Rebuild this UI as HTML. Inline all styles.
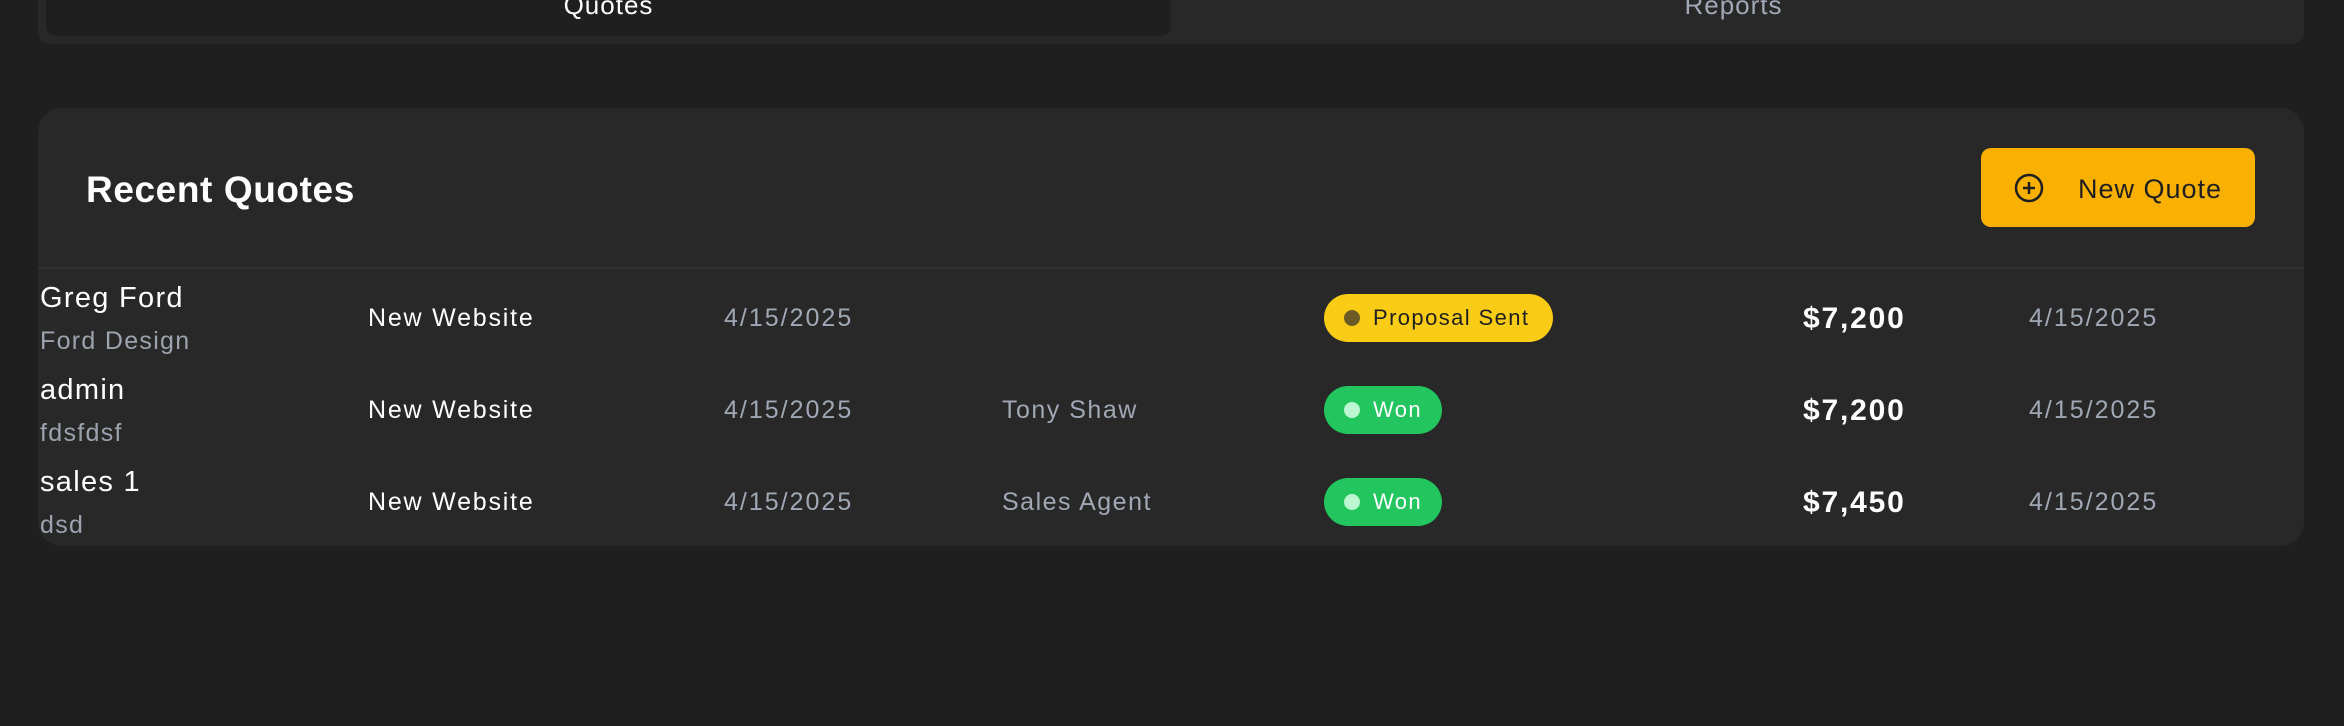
<!DOCTYPE html>
<html><head><meta charset="utf-8"><style>
*{margin:0;padding:0;box-sizing:border-box}
body{width:2344px;height:726px;background:#1f1f1f;font-family:"Liberation Sans",sans-serif;position:relative;overflow:hidden}
.abs{position:absolute;white-space:nowrap}
.tabs{left:38px;top:-20px;width:2266px;height:64px;background:#282828;border-radius:0 0 12px 12px}
.tab1{left:46px;top:-20px;width:1125px;height:56px;background:#1f1f1f;border-radius:0 0 10px 10px}
.card{left:38px;top:108px;width:2266px;height:438px;background:#282828;border-radius:24px}
.div{left:38px;top:267px;width:2266px;height:2px;background:#313131}
.btn{left:1981px;top:148px;width:274px;height:79px;background:#f9b000;border-radius:10px}
.name{font-size:29px;color:#fff;left:40px;letter-spacing:1.3px}
.sub{font-size:25px;color:#9ca3af;left:40px;letter-spacing:1.3px}
.c2{font-size:25px;color:#fff;left:368px;letter-spacing:1.8px}
.c3{font-size:25px;color:#a1a8b5;left:724px;letter-spacing:2px}
.c4{font-size:25px;color:#a1a8b5;left:1002px;letter-spacing:1.5px}
.amt{font-size:30px;color:#fff;font-weight:bold;left:1803px;letter-spacing:1.8px}
.c6{font-size:25px;color:#a1a8b5;left:2029px;letter-spacing:2px}
.badge{left:1324px;height:48px;border-radius:24px;font-size:22px;padding-left:49px;line-height:48px;letter-spacing:1.4px}
.badge i{position:absolute;left:20px;top:16px;width:16px;height:16px;border-radius:50%}
.y{background:#facc15;color:#1f1f1f;width:229px}
.y i{background:#6b5a26}
.g{background:#22c55e;color:#fff;width:118px}
.g i{background:#bbf7d0}
</style></head><body>
<div class="abs tabs"></div>
<div class="abs tab1"></div>
<div class="abs" style="left:46px;width:1125px;top:-10px;text-align:center;font-size:26px;color:#fff;letter-spacing:1px">Quotes</div>
<div class="abs" style="left:1171px;width:1125px;top:-10px;text-align:center;font-size:26px;color:#a1a8b5;letter-spacing:1px">Reports</div>
<div class="abs card"></div>
<div class="abs div"></div>
<div class="abs" style="left:86px;top:169px;font-size:37px;color:#fff;font-weight:bold;letter-spacing:0.6px">Recent Quotes</div>
<div class="abs btn"></div>
<svg class="abs" style="left:2013px;top:172px" width="32" height="32" viewBox="0 0 32 32" fill="none" stroke="#1f1f1f" stroke-width="2.5"><circle cx="16" cy="16" r="13"/><path d="M16 10v12M10 16h12"/></svg>
<div class="abs" style="left:2078px;top:174px;font-size:27px;color:#1f1f1f;letter-spacing:1px">New Quote</div>

<div class="abs name" style="top:282px">Greg Ford</div>
<div class="abs sub" style="top:327px">Ford Design</div>
<div class="abs c2" style="top:304px">New Website</div>
<div class="abs c3" style="top:304px">4/15/2025</div>
<div class="abs badge y" style="top:294px"><i></i>Proposal Sent</div>
<div class="abs amt" style="top:302px">$7,200</div>
<div class="abs c6" style="top:304px">4/15/2025</div>

<div class="abs name" style="top:374px">admin</div>
<div class="abs sub" style="top:419px">fdsfdsf</div>
<div class="abs c2" style="top:396px">New Website</div>
<div class="abs c3" style="top:396px">4/15/2025</div>
<div class="abs c4" style="top:396px">Tony Shaw</div>
<div class="abs badge g" style="top:386px"><i></i>Won</div>
<div class="abs amt" style="top:394px">$7,200</div>
<div class="abs c6" style="top:396px">4/15/2025</div>

<div class="abs name" style="top:466px">sales 1</div>
<div class="abs sub" style="top:511px">dsd</div>
<div class="abs c2" style="top:488px">New Website</div>
<div class="abs c3" style="top:488px">4/15/2025</div>
<div class="abs c4" style="top:488px">Sales Agent</div>
<div class="abs badge g" style="top:478px"><i></i>Won</div>
<div class="abs amt" style="top:486px">$7,450</div>
<div class="abs c6" style="top:488px">4/15/2025</div>
</body></html>
